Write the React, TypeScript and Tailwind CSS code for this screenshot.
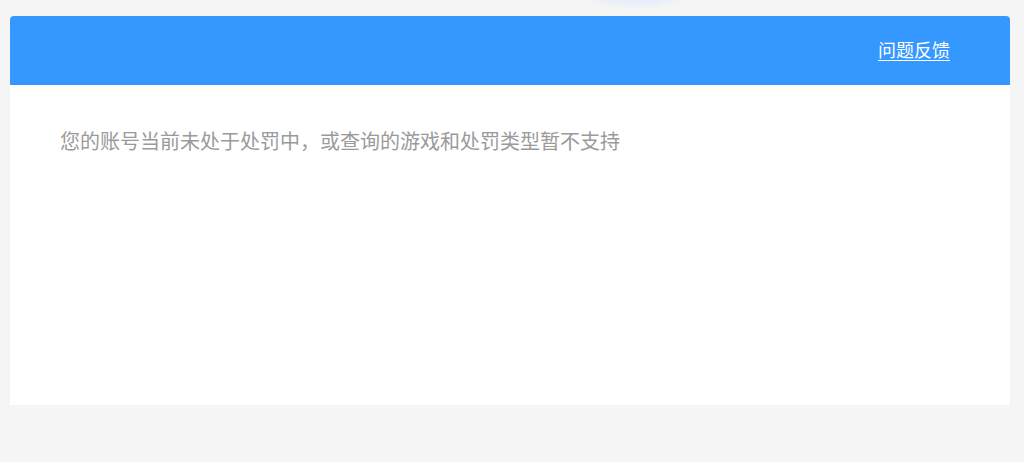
export default function App() {
  return (
    <div className="relative h-[462px] w-[1024px] overflow-hidden bg-[#f5f5f5] font-['Noto_Sans_CJK_SC',sans-serif]">
      {/* faint circle peeking above the card */}
      <div className="absolute left-[497px] top-[-274px] h-[280px] w-[280px] rounded-full bg-[#e6eefa] blur-[2px]" />

      <div className="relative pl-[10px] pt-[16px]">
        <div className="w-[1000px] overflow-hidden rounded-t-[4px] bg-white">
          <div className="flex h-[69px] items-center justify-end bg-[#3598fe] pb-[4px] pr-[60px]">
            <a className="text-[18px] leading-none text-white underline underline-offset-[3px] cursor-pointer">
              问题反馈
            </a>
          </div>
          <div className="h-[320px] px-[50px] pt-[42px]">
            <p className="text-[20px] leading-[28px] text-[#9a9a9a]">
              您的账号当前未处于处罚中，或查询的游戏和处罚类型暂不支持
            </p>
          </div>
        </div>
      </div>
    </div>
  );
}
